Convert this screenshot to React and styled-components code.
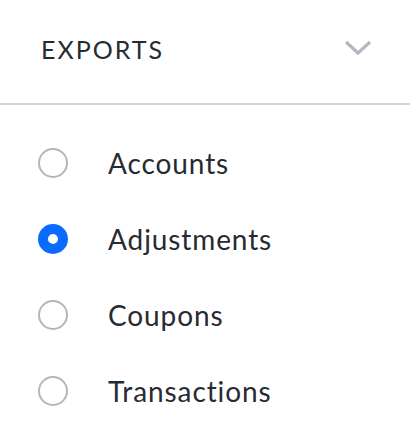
import React, { useState } from "react";
import styled, { createGlobalStyle } from "styled-components";

const Global = createGlobalStyle`
  body {
    margin: 0;
    background: #fff;
    font-family: Lato, "Open Sans", sans-serif;
  }
`;

const Panel = styled.div`
  width: 410px;
`;

const Header = styled.div`
  display: flex;
  align-items: center;
  justify-content: space-between;
  height: 105px;
  padding: 0 38px 0 41px;
  box-sizing: border-box;
  border-bottom: 2px solid #d1d4da;
`;

const Title = styled.div`
  font-size: 25px;
  letter-spacing: 2px;
  color: #262b33;
  margin-top: -6px;
`;

const Chevron = styled.svg`
  width: 28px;
  height: 16px;
  margin-top: -8px;
`;

const List = styled.div`
  display: flex;
  flex-direction: column;
  padding-top: 20px;
`;

const Row = styled.label`
  display: flex;
  align-items: center;
  height: 76px;
  padding-left: 38px;
  cursor: pointer;
`;

const Radio = styled.span`
  width: 30px;
  height: 30px;
  box-sizing: border-box;
  border-radius: 50%;
  border: ${(p) => (p.checked ? "10px solid #0a6cff" : "2px solid #b3b6bc")};
  background: #fff;
  flex-shrink: 0;
`;

const Label = styled.span`
  margin-left: 40px;
  font-size: 28px;
  letter-spacing: 0.9px;
  color: #262b33;
`;

const options = ["Accounts", "Adjustments", "Coupons", "Transactions"];

export default function App() {
  const [selected, setSelected] = useState("Adjustments");
  return (
    <Panel>
      <Global />
      <Header>
        <Title>EXPORTS</Title>
        <Chevron viewBox="0 0 28 16">
          <path d="M2 2 L14 13 L26 2" fill="none" stroke="#b3b8c0" strokeWidth="3.2" />
        </Chevron>
      </Header>
      <List>
        {options.map((o) => (
          <Row key={o} onClick={() => setSelected(o)}>
            <Radio checked={selected === o} />
            <Label>{o}</Label>
          </Row>
        ))}
      </List>
    </Panel>
  );
}
